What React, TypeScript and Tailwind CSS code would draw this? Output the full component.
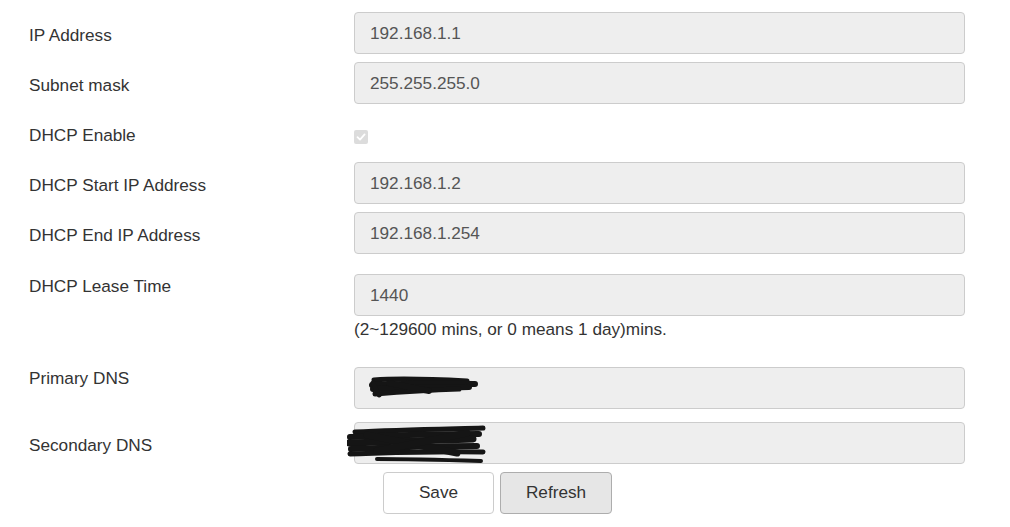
import React from "react";

const font = { fontFamily: '"Liberation Sans", Arial, sans-serif' };

function Field({ value, children }: { value?: string; children?: React.ReactNode }) {
  return (
    <div className="relative h-[42px] w-[611px] rounded-[4px] border border-[#cccccc] bg-[#eeeeee] pl-[15px] flex items-center text-[17.2px] leading-[20px] text-[#555555]">
      {value}
      {children}
    </div>
  );
}

function Row({ label, pt, children, className = "" }: { label: string; pt: string; children: React.ReactNode; className?: string }) {
  return (
    <div className={"flex " + className}>
      <div className={"w-[325px] shrink-0 text-[17.2px] leading-[20px] text-[#333333] " + pt}>{label}</div>
      <div>{children}</div>
    </div>
  );
}

export default function App() {
  return (
    <div className="w-[1010px] h-[527px] bg-white pl-[29px] pt-[12px] overflow-hidden" style={font}>
      <Row label="IP Address" pt="pt-[13px]" className="h-[50px]">
        <Field value="192.168.1.1" />
      </Row>
      <Row label="Subnet mask" pt="pt-[13px]" className="h-[50px]">
        <Field value="255.255.255.0" />
      </Row>
      <Row label="DHCP Enable" pt="pt-[13px]" className="h-[50px]">
        <div className="mt-[18px] h-[14px] w-[14px] rounded-[2px] bg-[#dcdcdc] flex items-center justify-center">
          <svg width="10" height="10" viewBox="0 0 10 10">
            <path d="M1.5 5.2 L4 7.6 L8.6 2.4" fill="none" stroke="#ffffff" strokeWidth="1.8" strokeLinecap="round" strokeLinejoin="round" />
          </svg>
        </div>
      </Row>
      <Row label="DHCP Start IP Address" pt="pt-[13px]" className="h-[50px]">
        <Field value="192.168.1.2" />
      </Row>
      <Row label="DHCP End IP Address" pt="pt-[13px]" className="h-[50px]">
        <Field value="192.168.1.254" />
      </Row>
      <Row label="DHCP Lease Time" pt="pt-[2px]" className="mt-[12px]">
        <Field value="1440" />
        <div className="mt-[3px] text-[17.2px] leading-[20px] text-[#333333]">(2~129600 mins, or 0 means 1 day)mins.</div>
      </Row>
      <Row label="Primary DNS" pt="pt-[1px]" className="mt-[28px]">
        <Field>
          <svg className="absolute left-[14px] top-[7px]" width="110" height="26" viewBox="0 0 110 26">
            <g fill="none" stroke="#151515" strokeLinecap="round">
              <path d="M5 5 C30 3 60 4 98 6" strokeWidth="5" />
              <path d="M3 10 C35 8 70 9 106 9" strokeWidth="6" />
              <path d="M4 14 C30 12 60 13 100 12" strokeWidth="6" />
              <path d="M6 19 C30 17 60 15 90 14" strokeWidth="5" />
              <path d="M4 8 L10 20" strokeWidth="5" />
              <path d="M20 8 L60 16" strokeWidth="6" />
            </g>
          </svg>
        </Field>
      </Row>
      <Row label="Secondary DNS" pt="pt-[13px]" className="mt-[13px]">
        <Field>
          <svg className="absolute left-[-8px] top-[2px]" width="142" height="40" viewBox="0 0 142 40">
            <g fill="none" stroke="#151515" strokeLinecap="round">
              <path d="M8 7 C50 5 100 4 136 3" strokeWidth="5" />
              <path d="M3 12 C50 10 100 9 132 9" strokeWidth="6" />
              <path d="M2 18 C50 16 100 15 126 14" strokeWidth="7" />
              <path d="M4 24 C50 22 100 21 130 21" strokeWidth="6" />
              <path d="M3 29 C40 28 80 26 136 27" strokeWidth="5" />
              <path d="M30 34 C60 34 100 35 134 36" strokeWidth="4" />
              <path d="M20 10 L110 28" strokeWidth="7" />
              <path d="M30 26 L120 8" strokeWidth="7" />
            </g>
          </svg>
        </Field>
      </Row>
      <div className="mt-[8px] ml-[325px] flex gap-[6px]">
        <button className="ml-[29px] h-[42px] w-[111px] rounded-[4px] border border-[#cccccc] bg-white text-[17.2px] text-[#333333]">Save</button>
        <button className="h-[42px] w-[112px] rounded-[4px] border border-[#adadad] bg-[#e6e6e6] text-[17.2px] text-[#333333]">Refresh</button>
      </div>
    </div>
  );
}
